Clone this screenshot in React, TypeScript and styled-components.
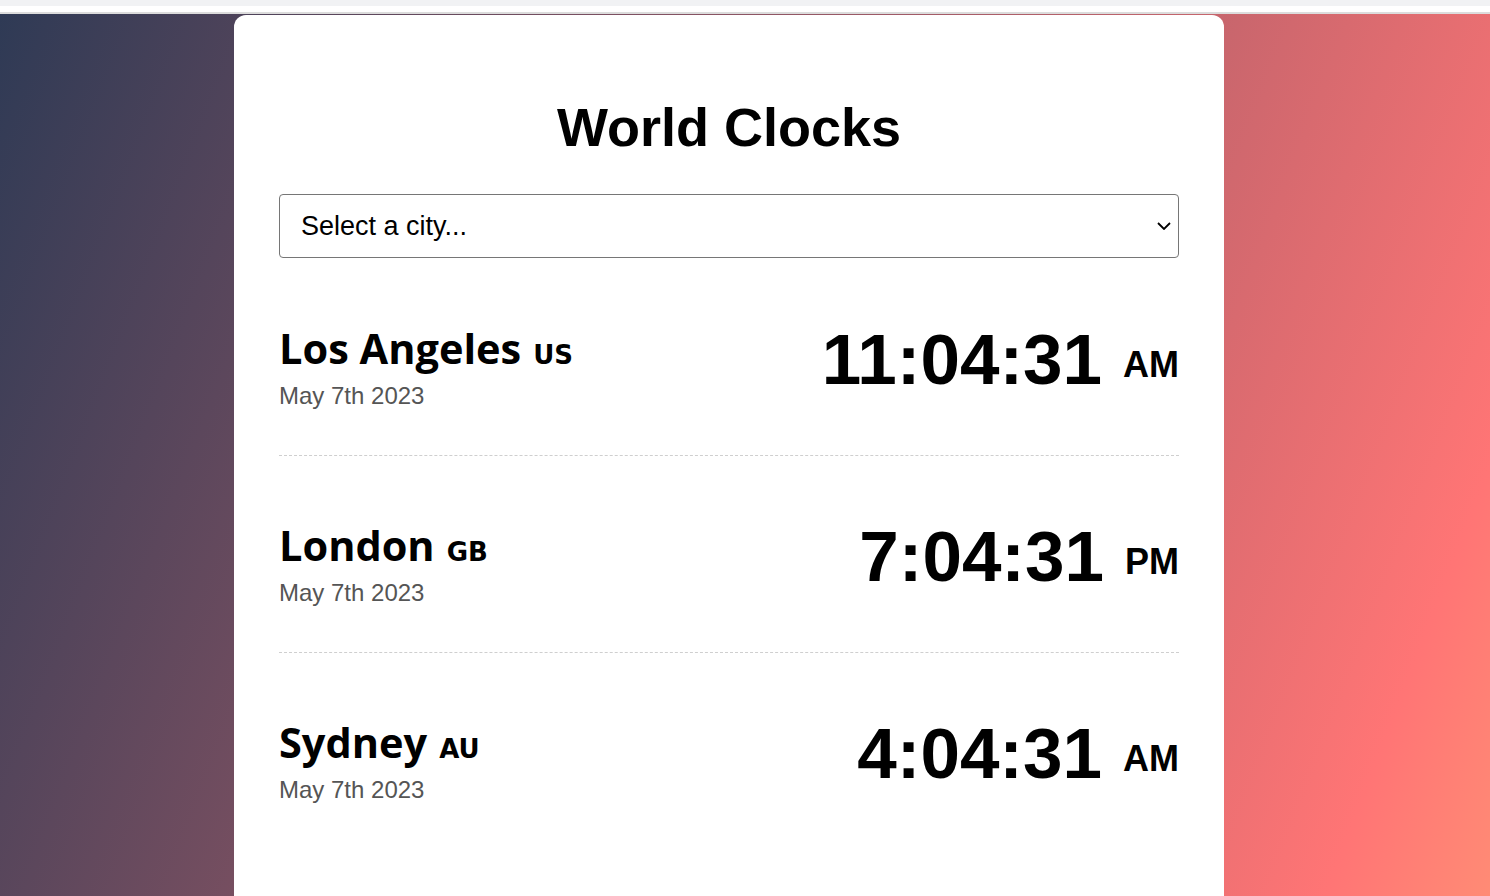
import React from "react";
import styled, { createGlobalStyle } from "styled-components";

const GlobalStyle = createGlobalStyle`
  html, body {
    margin: 0;
    padding: 0;
  }
  body {
    font-family: "Liberation Sans", Arial, sans-serif;
    background: #fff;
  }
`;

const BrowserStrip = styled.div`
  height: 6px;
  background: #f1f2f4;
  border-bottom: 6px solid #fff;
`;

const Page = styled.main`
  min-height: 100vh;
  border-top: 2px solid #dcdcdc;
  padding-top: 1px;
  background: linear-gradient(111deg, #2e3a55 0%, #ff7575 91%, #ff8b75 100%) fixed;
`;

const Card = styled.section`
  box-sizing: border-box;
  width: 990px;
  margin-left: 234px;
  padding: 45px 45px 60px;
  background: #fff;
  border-radius: 12px 12px 0 0;
`;

const Title = styled.h1`
  margin: 36px 0;
  text-align: center;
  font-size: 54px;
  font-weight: 700;
  color: #000;
`;

const SelectWrap = styled.div`
  position: relative;
  margin-bottom: 1px;
`;

const CitySelect = styled.select`
  display: block;
  box-sizing: border-box;
  width: 100%;
  height: 64px;
  padding: 0 40px 0 21px;
  font-family: "Liberation Sans", Arial, sans-serif;
  font-size: 27px;
  color: #000;
  background: #fff;
  border: 1px solid #767676;
  border-radius: 4px;
  appearance: none;
  -webkit-appearance: none;
  outline: none;
`;

const Chevron = styled.svg`
  position: absolute;
  right: 8px;
  top: 50%;
  margin-top: -4px;
  width: 14px;
  height: 8px;
  pointer-events: none;
`;

const ClockRow = styled.div`
  display: flex;
  justify-content: space-between;
  align-items: flex-start;
  height: 197px;
  box-sizing: border-box;
  padding-top: 58px;
  border-bottom: 1px dashed #cfcfcf;

  &:last-child {
    border-bottom: none;
  }
`;

const CityBlock = styled.div`
  margin-top: 7px;
`;

const CityName = styled.div`
  font-family: "Open Sans", "Noto Sans", sans-serif;
  font-weight: 700;
  font-size: 41.5px;
  line-height: 48px;
  color: #000;
`;

const Country = styled.span`
  font-family: "DejaVu Sans", Verdana, sans-serif;
  font-weight: 700;
  font-size: 26px;
  margin-left: 12px;
`;

const DateText = styled.div`
  font-size: 24px;
  line-height: 28px;
  color: #555;
  margin-top: 3px;
`;

const TimeText = styled.div`
  font-size: 71px;
  font-weight: 700;
  line-height: 85px;
  color: #000;
  white-space: nowrap;
`;

const Meridiem = styled.span`
  font-size: 36px;
  margin-left: 21px;
  vertical-align: 7px;
`;

type Clock = {
  city: string;
  country: string;
  time: string;
  meridiem: string;
  date: string;
};

const clocks: Clock[] = [
  { city: "Los Angeles", country: "US", time: "11:04:31", meridiem: "AM", date: "May 7th 2023" },
  { city: "London", country: "GB", time: "7:04:31", meridiem: "PM", date: "May 7th 2023" },
  { city: "Sydney", country: "AU", time: "4:04:31", meridiem: "AM", date: "May 7th 2023" },
];

const App = () => {
  return (
    <>
      <GlobalStyle />
      <BrowserStrip />
      <Page>
        <Card>
          <Title>World Clocks</Title>
          <SelectWrap>
            <CitySelect defaultValue="">
              <option value="">Select a city...</option>
              <option value="tokyo">Tokyo</option>
              <option value="paris">Paris</option>
              <option value="new-york">New York</option>
            </CitySelect>
            <Chevron viewBox="0 0 14 8">
              <path d="M1 1l6 6 6-6" fill="none" stroke="#000" strokeWidth="1.8" />
            </Chevron>
          </SelectWrap>
          {clocks.map((c) => (
            <ClockRow key={c.city}>
              <CityBlock>
                <CityName>
                  {c.city}
                  <Country>{c.country}</Country>
                </CityName>
                <DateText>{c.date}</DateText>
              </CityBlock>
              <TimeText>
                {c.time}
                <Meridiem>{c.meridiem}</Meridiem>
              </TimeText>
            </ClockRow>
          ))}
        </Card>
      </Page>
    </>
  );
};

export default App;
